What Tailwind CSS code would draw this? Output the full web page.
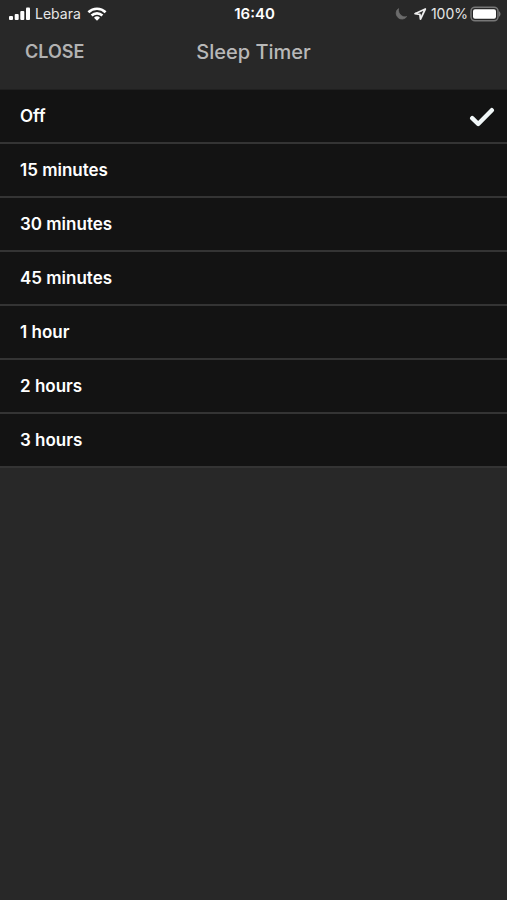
<!DOCTYPE html>
<html lang="en">
<head>
    <meta charset="UTF-8">
    <meta name="viewport" content="width=device-width, initial-scale=1.0">
    <title>Sleep Timer</title>
    <script src="https://cdn.jsdelivr.net/npm/@tailwindcss/browser@4"></script>
</head>
<body class="min-h-screen bg-[#282828] font-['Inter','Liberation_Sans',sans-serif] text-white">

    <!-- Status Bar -->
    <div class="grid h-7 grid-cols-[1fr_auto_1fr] items-center pl-2 pr-1.5 text-sm text-[#e6e6e6]">
        <div class="flex items-center gap-1">
            <svg class="h-3.5 w-[23px]" viewBox="0 0 23 14" fill="#fff">
                <rect x="1" y="9" width="4" height="4" rx="1"/>
                <rect x="6.7" y="7" width="4" height="6" rx="1"/>
                <rect x="12.3" y="4" width="4" height="9" rx="1"/>
                <rect x="18" y="0.500" width="4" height="12.500" rx="1"/>
            </svg>
            <span>Lebara</span>
            <svg class="ml-0.5 h-3.5 w-5" viewBox="0 0 20 14" fill="none" stroke="#fff" stroke-width="2.6">
                <path d="M1.4 5.2a12.4 12.4 0 0 1 17.2 0"/>
                <path d="M4.6 8.5a7.8 7.8 0 0 1 10.8 0"/>
                <path d="M10 13.8 7 10.8a4.3 4.3 0 0 1 6 0z" fill="#fff" stroke="none"/>
            </svg>
        </div>
        <span class="text-[15px] font-semibold text-white">16:40</span>
        <div class="flex items-center justify-end">
            <svg class="mr-1.5 h-3 w-3" viewBox="0 0 12 12" fill="#6c6c6c">
                <path d="M3.5.6A5.8 5.8 0 1 0 11.700 8.600C7.500 10 2.700 6 3.500.6z" stroke="#6c6c6c" stroke-width=".8" stroke-linejoin="round"/>
            </svg>
            <svg class="mr-1 h-3.5 w-3.5" viewBox="0 0 14 14" fill="none" stroke="#eee" stroke-width="1.8" stroke-linejoin="round">
                <path d="M12.3 2 2 6.7l4.9.6.6 4.9z"/>
            </svg>
            <span>100%</span>
            <svg class="ml-0.5 h-4 w-[31px]" viewBox="0 0 31 16">
                <rect x="1" y="1.2" width="27" height="13.600" rx="4" fill="#282828" stroke="#777" stroke-width="1.5"/>
                <rect x="3" y="3.2" width="23" height="9.600" rx="2" fill="#fff"/>
                <path d="M29 5.3c2 1 2 4.400 0 5.400z" fill="#777"/>
            </svg>
        </div>
    </div>

    <!-- Header -->
    <header class="grid h-[62px] grid-cols-[1fr_auto_1fr] items-start border-b border-[#202020]">
        <button type="button" class="ml-[25px] mt-2.5 justify-self-start text-lg leading-7 font-semibold text-[#b2b2b2]">CLOSE</button>
        <h1 class="mt-2.5 text-xl leading-7 font-medium text-[#b8b8b8]">Sleep Timer</h1>
    </header>

    <!-- Timer Options -->
    <form class="bg-[#131313] text-[17px] font-semibold">
        <label class="flex h-[54px] items-center justify-between border-b-2 border-[#343434] pl-5 pr-3 pt-0.5">
            <span>Off</span>
            <input type="radio" name="timer" value="0" class="peer sr-only" checked>
            <svg class="invisible h-5 w-[26px] peer-checked:visible" viewBox="0 0 26 20" fill="none" stroke="#f1f7f8" stroke-width="4.4" stroke-linecap="round" stroke-linejoin="round">
                <path d="M3.2 11.2 9.2 17 22.8 3.2"/>
            </svg>
        </label>
        <label class="flex h-[54px] items-center justify-between border-b-2 border-[#343434] pl-5 pr-3 pt-0.5">
            <span>15 minutes</span>
            <input type="radio" name="timer" value="15" class="peer sr-only">
            <svg class="invisible h-5 w-[26px] peer-checked:visible" viewBox="0 0 26 20" fill="none" stroke="#f1f7f8" stroke-width="4.4" stroke-linecap="round" stroke-linejoin="round">
                <path d="M3.2 11.2 9.2 17 22.8 3.2"/>
            </svg>
        </label>
        <label class="flex h-[54px] items-center justify-between border-b-2 border-[#343434] pl-5 pr-3 pt-0.5">
            <span>30 minutes</span>
            <input type="radio" name="timer" value="30" class="peer sr-only">
            <svg class="invisible h-5 w-[26px] peer-checked:visible" viewBox="0 0 26 20" fill="none" stroke="#f1f7f8" stroke-width="4.4" stroke-linecap="round" stroke-linejoin="round">
                <path d="M3.2 11.2 9.2 17 22.8 3.2"/>
            </svg>
        </label>
        <label class="flex h-[54px] items-center justify-between border-b-2 border-[#343434] pl-5 pr-3 pt-0.5">
            <span>45 minutes</span>
            <input type="radio" name="timer" value="45" class="peer sr-only">
            <svg class="invisible h-5 w-[26px] peer-checked:visible" viewBox="0 0 26 20" fill="none" stroke="#f1f7f8" stroke-width="4.4" stroke-linecap="round" stroke-linejoin="round">
                <path d="M3.2 11.2 9.2 17 22.8 3.2"/>
            </svg>
        </label>
        <label class="flex h-[54px] items-center justify-between border-b-2 border-[#343434] pl-5 pr-3 pt-0.5">
            <span>1 hour</span>
            <input type="radio" name="timer" value="60" class="peer sr-only">
            <svg class="invisible h-5 w-[26px] peer-checked:visible" viewBox="0 0 26 20" fill="none" stroke="#f1f7f8" stroke-width="4.4" stroke-linecap="round" stroke-linejoin="round">
                <path d="M3.2 11.2 9.2 17 22.8 3.2"/>
            </svg>
        </label>
        <label class="flex h-[54px] items-center justify-between border-b-2 border-[#343434] pl-5 pr-3 pt-0.5">
            <span>2 hours</span>
            <input type="radio" name="timer" value="120" class="peer sr-only">
            <svg class="invisible h-5 w-[26px] peer-checked:visible" viewBox="0 0 26 20" fill="none" stroke="#f1f7f8" stroke-width="4.4" stroke-linecap="round" stroke-linejoin="round">
                <path d="M3.2 11.2 9.2 17 22.8 3.2"/>
            </svg>
        </label>
        <label class="flex h-[54px] items-center justify-between border-b-2 border-[#343434] pl-5 pr-3 pt-0.5">
            <span>3 hours</span>
            <input type="radio" name="timer" value="180" class="peer sr-only">
            <svg class="invisible h-5 w-[26px] peer-checked:visible" viewBox="0 0 26 20" fill="none" stroke="#f1f7f8" stroke-width="4.4" stroke-linecap="round" stroke-linejoin="round">
                <path d="M3.2 11.2 9.2 17 22.8 3.2"/>
            </svg>
        </label>
    </form>

</body>
</html>
